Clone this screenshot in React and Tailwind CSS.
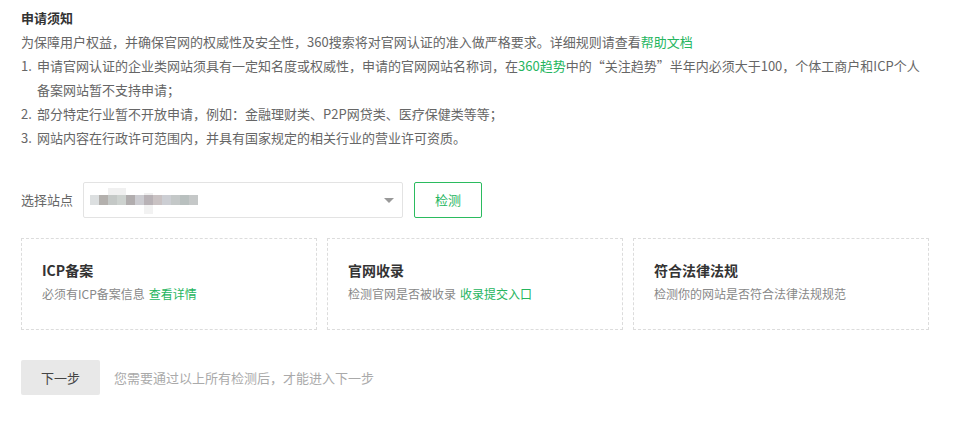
import React from "react";

const blocks = [
  ["#dcdfe0", 0, 0],
  ["#b3b0ad", 0, 0],
  ["#c4c8c6", -7, 0],
  ["#cdd2cf", -7, 0],
  ["#b1adae", 0, 0],
  ["#cbcbd0", 0, 0],
  ["#b8b2b6", -2, 9],
  ["#c9c2c3", 0, 0],
  ["#ccced3", 0, 0],
  ["#c4c8c8", 0, 0],
  ["#b9c0bf", 0, 0],
  ["#c5c8c8", 0, 0],
];

function Card({ title, desc, link }) {
  return (
    <div className="h-[92px] border border-dashed border-[#dcdcdc] px-5 pt-[19px]">
      <div className="text-[14px] leading-[24px] font-bold text-[#333]">{title}</div>
      <div className="text-[12px] leading-[24px] text-[#888]">
        {desc}
        {link && <span className="ml-1 text-[#25b55e]">{link}</span>}
      </div>
    </div>
  );
}

export default function App() {
  return (
    <div
      className="min-h-[429px] bg-white px-[21px] pt-[6px] text-[13px] text-[#666]"
      style={{ fontFamily: '"Noto Sans CJK SC", "Noto Sans", sans-serif' }}
    >
      <div className="w-[908px]">
        <div className="text-[13px] leading-[24px] font-bold text-[#333]">申请须知</div>
        <div className="leading-[24px]">
          为保障用户权益，并确保官网的权威性及安全性，360搜索将对官网认证的准入做严格要求。详细规则请查看
          <span className="text-[#25b55e]">帮助文档</span>
        </div>
        <div className="flex leading-[24px]">
          <span className="w-[16px] shrink-0">1.</span>
          <span>
            申请官网认证的企业类网站须具有一定知名度或权威性，申请的官网网站名称词，在
            <span className="text-[#25b55e]">360趋势</span>
            中的“关注趋势”半年内必须大于100，个体工商户和ICP个人
            <br />
            备案网站暂不支持申请；
          </span>
        </div>
        <div className="flex leading-[24px]">
          <span className="w-[16px] shrink-0">2.</span>
          <span>部分特定行业暂不开放申请，例如：金融理财类、P2P网贷类、医疗保健类等等；</span>
        </div>
        <div className="flex leading-[24px]">
          <span className="w-[16px] shrink-0">3.</span>
          <span>网站内容在行政许可范围内，并具有国家规定的相关行业的营业许可资质。</span>
        </div>

        <div className="mt-[32px] flex items-center">
          <span className="w-[52px] text-[13px] text-[#666]">选择站点</span>
          <div className="ml-[10px] flex h-[36px] w-[320px] items-center justify-between rounded-[2px] border border-[#e3e3e3] pl-[6px] pr-[8px]">
            <div className="flex h-[27px] items-center">
              {blocks.map(([c, up, down], i) => (
                <div key={i} className="relative h-[10px] w-[9px]" style={{ background: c }}>
                  {up !== 0 && (
                    <div
                      className="absolute left-0 w-[9px] bg-[#f0f0f0]"
                      style={{ top: up, height: -up }}
                    />
                  )}
                  {down !== 0 && (
                    <div
                      className="absolute left-0 w-[9px] bg-[#f2f2f2]"
                      style={{ top: 10, height: down }}
                    />
                  )}
                </div>
              ))}
            </div>
            <div className="h-0 w-0 border-x-[5px] border-t-[5px] border-x-transparent border-t-[#999]" />
          </div>
          <button className="ml-[11px] h-[36px] w-[68px] rounded-[2px] border border-[#2bbb5f] text-[13px] text-[#25b55e]">
            检测
          </button>
        </div>

        <div className="mt-[20px] grid grid-cols-3 gap-[10px]">
          <Card title="ICP备案" desc="必须有ICP备案信息" link="查看详情" />
          <Card title="官网收录" desc="检测官网是否被收录" link="收录提交入口" />
          <Card title="符合法律法规" desc="检测你的网站是否符合法律法规规范" />
        </div>

        <div className="mt-[30px] flex items-center">
          <button className="h-[35px] w-[79px] rounded-[2px] bg-[#e8e8e8] text-[13px] text-[#444]">
            下一步
          </button>
          <span className="ml-[14px] text-[13px] text-[#aaa]">您需要通过以上所有检测后，才能进入下一步</span>
        </div>
      </div>
    </div>
  );
}
